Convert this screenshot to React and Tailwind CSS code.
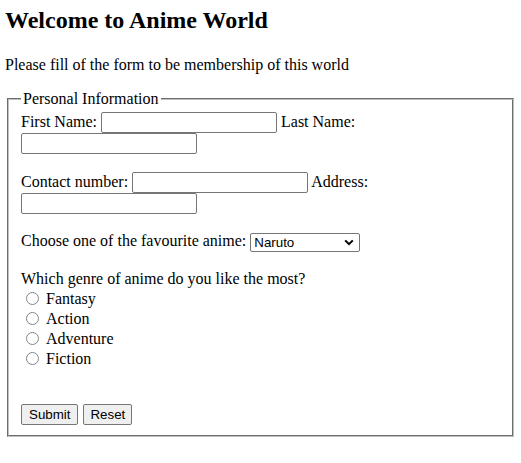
import React from 'react'

const inputCls =
  'inline-block w-[176px] h-[21px] align-baseline border border-[#767676] rounded-[2px] bg-white px-[2px] text-[13.333px] font-["Liberation_Sans",Arial,sans-serif]'

const btnCls =
  'inline-block h-[21px] align-baseline border border-[#767676] rounded-[2px] bg-[#efefef] text-black text-[13.333px] leading-[normal] font-["Liberation_Sans",Arial,sans-serif]'

function Radio({ name, label }) {
  return (
    <div className="h-[20px] pt-[2px] flex items-center">
      <input
        type="radio"
        name={name}
        className="appearance-none inline-block w-[13px] h-[13px] mr-[3px] ml-[5px] rounded-full border border-[#858585] bg-white"
      />
      <span className="ml-[4px]">{label}</span>
    </div>
  )
}

function App() {
  return (
    <div className="min-h-screen bg-white px-[5px] pt-[7px] text-black text-[16px] leading-[normal] font-['Liberation_Serif','Times_New_Roman',serif]">
      <h1 className="text-[24px] font-bold leading-[normal] mb-[21.9px]">Welcome to Anime World</h1>
      <p className="mb-[16px]">Please fill of the form to be membership of this world</p>

      <form>
        <fieldset className="mx-[2px] border-2 border-[#c0c0c0] [border-style:groove] px-[12px] pt-[4.6px] pb-[10px] min-w-0">
          <legend className="px-[2px]">Personal Information</legend>
          First Name: <input type="text" className={inputCls} /> Last Name:{' '}
          <input type="text" className={inputCls} />
          <br />
          <br />
          Contact number: <input type="text" className={inputCls} /> Address:{' '}
          <input type="text" className={inputCls} />
          <br />
          <br />
          Choose one of the favourite anime:{' '}
          <span className="inline-flex items-center justify-between w-[110px] h-[19px] align-baseline border border-[#767676] rounded-[2px] bg-white pl-[3px] pr-[5px] text-[13.333px] leading-none font-['Liberation_Sans',Arial,sans-serif]">
            <span className="translate-y-[0.5px]">Naruto</span>
            <svg width="10" height="7" viewBox="0 0 10 7" className="shrink-0">
              <polyline points="1.2,1.4 5,5.2 8.8,1.4" fill="none" stroke="#000" strokeWidth="2" />
            </svg>
          </span>
          <br />
          <br />
          Which genre of anime do you like the most?
          <Radio name="genre" label="Fantasy" />
          <Radio name="genre" label="Action" />
          <Radio name="genre" label="Adventure" />
          <Radio name="genre" label="Fiction" />
          <br />
          <br />
          <button type="submit" className={`${btnCls} px-[7px] mr-[1px]`}>Submit</button>{' '}
          <button type="reset" className={`${btnCls} px-[6px]`}>Reset</button>
        </fieldset>
      </form>
    </div>
  )
}

export default App
